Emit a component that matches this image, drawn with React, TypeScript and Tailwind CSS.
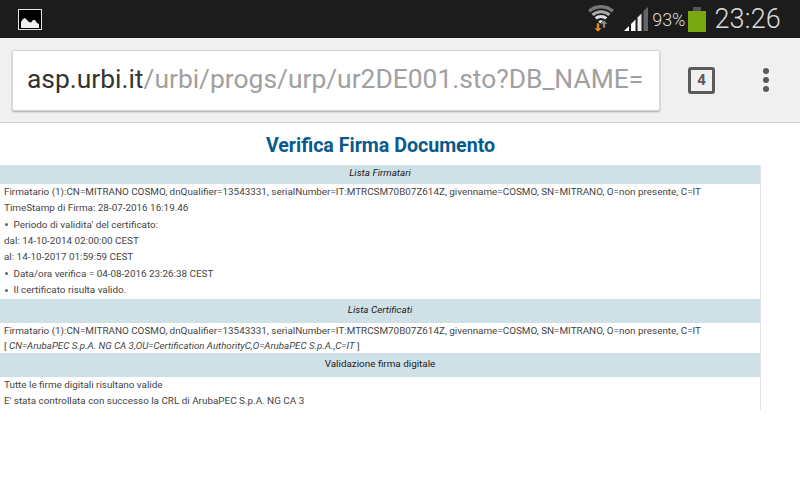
const font = "font-['Roboto',sans-serif]";

const FIRMATARIO =
  'Firmatario (1):CN=MITRANO COSMO, dnQualifier=13543331, serialNumber=IT:MTRCSM70B07Z614Z, givenname=COSMO, SN=MITRANO, O=non presente, C=IT';

const Line = ({ children, bullet }: { children: React.ReactNode; bullet?: boolean }) => (
  <div className="h-[16.33px] pl-1 leading-[16.33px] whitespace-nowrap flex items-center">
    {bullet && <span className="w-[3px] h-[3px] rounded-full bg-[#666] ml-px mr-[5.5px]" />}
    <span>{children}</span>
  </div>
);

const SectionHead = ({ children, italic, h }: { children: React.ReactNode; italic?: boolean; h: string }) => (
  <div className={`bg-[#cfe0e6] text-[#222] text-center flex items-center justify-center pb-[2px] ${h} ${italic ? 'italic' : ''}`}>
    {children}
  </div>
);

function StatusBar() {
  return (
    <div className="h-[38px] bg-[#1c1c1c] flex items-center justify-between pl-[18px] pr-[19px]">
      <svg width="24" height="21" viewBox="0 0 24 21">
        <rect x="0.5" y="0.5" width="23" height="20" fill="#000" stroke="#e4e4e4" />
        <path d="M3 19v-6l2-3 2-1 2 2 2 2 2 .5 2-2.500 2 0 2 3 2 1v4z" fill="#f0f0f0" />
      </svg>
      <div className="flex items-center">
        <svg width="26" height="27" viewBox="0 0 26 27" className="mb-[1px]">
          <g fill="none">
            <path d="M1.14 6.25A17.700 17.700 0 0 1 24.860 6.250" stroke="#777" strokeWidth="3.400" />
            <path d="M4.500 9.960A12.700 12.700 0 0 1 21.500 9.960" stroke="#aaa" strokeWidth="3" />
            <path d="M7.640 13.460A8 8 0 0 1 18.360 13.460" stroke="#ddd" strokeWidth="3" />
          </g>
          <path d="M13 19.400L10.320 16.430A4 4 0 0 1 15.680 16.430z" fill="#eee" />
          <path d="M16 15l4 4h-2.500v4h-3v-4H12z" fill="#8a8a8a" stroke="#1c1c1c" strokeWidth="0.6" />
          <path d="M8.500 18h3v5H14l-4 4-4-4h2.500z" fill="#e58a1f" stroke="#1c1c1c" strokeWidth="0.6" />
        </svg>
        <svg width="24" height="24" viewBox="0 0 24 24" className="ml-[10px]">
          <path d="M0 24l5-5v5z" fill="#fff" />
          <path d="M7 24v-7l4.500-4.500V24z" fill="#fff" />
          <path d="M13.500 24V10.500l4-4V24z" fill="#e8e8e8" />
          <path d="M19.500 24V4L24 0v24z" fill="#666" />
        </svg>
        <span className={`${font} text-[#dcdcdc] text-[18px] ml-[4px] font-light`}>93%</span>
        <div className="ml-[3px] flex flex-col items-center mt-[1px]">
          <div className="w-[8px] h-[4px] bg-[#555]" />
          <div className="w-[18px] h-[21px] bg-[#7aa813]" />
        </div>
        <span className={`${font} text-[#dcdcdc] text-[27px] font-light ml-[8px] tracking-[0.2px]`}>23:26</span>
      </div>
    </div>
  );
}

function Toolbar() {
  return (
    <div className="h-[85px] bg-[#f0f0f0] border-b border-[#cfcfcf] flex items-center pl-[12px]">
      <div className={`${font} w-[648px] h-[61px] bg-white border border-[#d4d4d4] rounded-[2px] shadow-[0_1px_2px_rgba(0,0,0,0.3)] overflow-hidden whitespace-nowrap pl-[14px] flex items-center text-[26.4px]`}>
        <span className="text-[#333]">asp.urbi.it</span>
        <span className="text-[#a0a0a0]">/urbi/progs/urp/ur2DE001.sto?DB_NAME=</span>
      </div>
      <div className="ml-[28px] w-[27px] h-[27px] border-[3px] border-[#5a5a5a] rounded-[3px] flex items-center justify-center">
        <span className={`${font} text-[#5a5a5a] text-[15px] font-bold`}>4</span>
      </div>
      <div className="ml-[48px] flex flex-col gap-[3px]">
        <div className="w-[6px] h-[6px] rounded-full bg-[#5a5a5a]" />
        <div className="w-[6px] h-[6px] rounded-full bg-[#5a5a5a]" />
        <div className="w-[6px] h-[6px] rounded-full bg-[#5a5a5a]" />
      </div>
    </div>
  );
}

export default function App() {
  return (
    <div className={`${font} w-[800px] h-[480px] bg-white overflow-hidden`}>
      <StatusBar />
      <Toolbar />
      <h1 className="h-[42px] pt-[10px] w-[761px] text-center text-[#085a8c] text-[19.6px] leading-[26px] font-bold">
        Verifica Firma Documento
      </h1>
      <div className="w-[761px] border-r border-[#e0e6e8] text-[9.88px] text-[#444]">
        <SectionHead italic h="h-[19px]">Lista Firmatari</SectionHead>
        <div className="h-[115px]">
          <Line>{FIRMATARIO}</Line>
          <Line>TimeStamp di Firma: 28-07-2016 16:19.46</Line>
          <Line bullet>Periodo di validita' del certificato:</Line>
          <Line>dal: 14-10-2014 02:00:00 CEST</Line>
          <Line>al: 14-10-2017 01:59:59 CEST</Line>
          <Line bullet>Data/ora verifica = 04-08-2016 23:26:38 CEST</Line>
          <Line bullet>Il certificato risulta valido.</Line>
        </div>
        <SectionHead italic h="h-[24px]">Lista Certificati</SectionHead>
        <div className="h-[30px]">
          <Line>{FIRMATARIO}</Line>
          <div className="pl-1 h-[14px] leading-[14px]">
            [ <span className="italic text-[9.7px]">CN=ArubaPEC S.p.A. NG CA 3,OU=Certification AuthorityC,O=ArubaPEC S.p.A.,C=IT</span> ]
          </div>
        </div>
        <SectionHead h="h-[24px]">Validazione firma digitale</SectionHead>
        <div className="h-[33px]">
          <Line>Tutte le firme digitali risultano valide</Line>
          <Line>E' stata controllata con successo la CRL di ArubaPEC S.p.A. NG CA 3</Line>
        </div>
      </div>
    </div>
  );
}
